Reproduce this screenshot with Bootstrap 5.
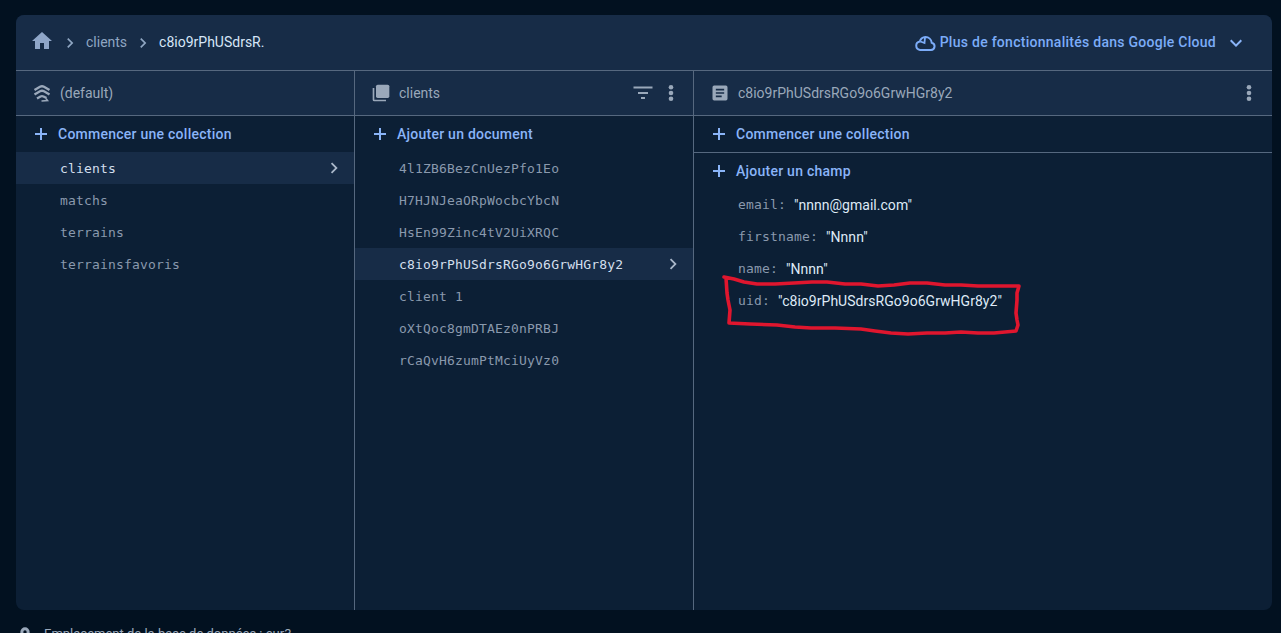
<!DOCTYPE html>
<html lang="fr">
<head>
<meta charset="UTF-8">
<title>Firestore</title>
<link href="https://cdn.jsdelivr.net/npm/bootstrap@5.3.0/dist/css/bootstrap.min.css" rel="stylesheet">
<style>
html, body { height: 633px; overflow: hidden; }
body { background: #021120; font-family: Roboto, "Liberation Sans", sans-serif; font-size: 14px; color: #e3e8ef; }
.fs-page { padding: 15px 9px 0 16px; }
.fs-panel { position: relative; height: 595px; background: #0c1f35; border-radius: 8px; overflow: hidden; }
.fs-top { height: 56px; background: #172c47; border-bottom: 1px solid #56687f; padding: 0 24px 0 14px; }
.fs-home { margin-top: -4px; }
.fs-crumb { color: #8fa6c2; }
.fs-crumb-now { color: #d6e6f8; }
.fs-cloud { color: #7cacf8; font-weight: 500; letter-spacing: .27px; }
.fs-cols { height: 539px; }
.fs-col { width: 339px; border-right: 1px solid #56687f; flex: none; }
.fs-col:last-child { flex: 1 1 auto; width: auto; border-right: 0; }
.fs-colhead { height: 45px; background: #172c47; border-bottom: 1px solid #56687f; padding: 0 16px 0 16px; color: #9aa8ba; }
.fs-colhead .fs-ic { width: 20px; margin-right: 8px; }
.fs-add { height: 36px; padding-left: 18px; color: #8ab4f8; font-weight: 500; letter-spacing: .25px; }
.fs-add svg { margin-right: 10px; }
.fs-sep { height: 37px; border-bottom: 1px solid #56687f; }
.fs-row { height: 32px; padding: 2px 9px 0 44px; font-family: "DejaVu Sans Mono", "Liberation Mono", monospace; font-size: 13px; letter-spacing: .18px; color: #8a99ad; }
.fs-row.fs-sel { background: #172c47; color: #d3dfed; }
.fs-row.fs-sel svg { margin-top: -2px; }
.fs-field { height: 32px; padding-left: 44px; }
.fs-key { font-family: "DejaVu Sans Mono", "Liberation Mono", monospace; font-size: 13px; letter-spacing: .18px; color: #8a99ad; margin-right: 8px; }
.fs-val { color: #dfeaf7; letter-spacing: .03px; }
.fs-scribble { position: absolute; left: 0; top: 0; pointer-events: none; }
.fs-foot { padding: 14px 0 0 1px; color: #9aa8ba; font-size: 13px; line-height: 20px; }
.fs-foot svg { margin-right: 11px; }
</style>
</head>
<body>
<div class="fs-page">
  <div class="fs-panel">
    <div class="fs-top d-flex align-items-center">
      <svg class="fs-home" width="24" height="24" viewBox="0 0 24 24" fill="#8fa6c8"><path d="M10 20v-6h4v6h5v-8h3L12 3 2 12h3v8z"/></svg>
      <svg width="20" height="20" viewBox="0 0 24 24" fill="#8fa6c2" style="margin-left:6px;margin-right:6px"><path d="M8.600 16.600 13.200 12 8.600 7.400 10 6l6 6-6 6z"/></svg>
      <span class="fs-crumb">clients</span>
      <svg width="20" height="20" viewBox="0 0 24 24" fill="#8fa6c2" style="margin-left:6px;margin-right:6px"><path d="M8.600 16.600 13.200 12 8.600 7.400 10 6l6 6-6 6z"/></svg>
      <span class="fs-crumb-now">c8io9rPhUSdrsR.</span>
      <span class="ms-auto d-flex align-items-center fs-cloud">
        <svg width="22" height="22" viewBox="0 0 22 22" fill="none" stroke="#7cacf8" stroke-width="2" style="margin-right:4px"><path d="M6 18h11a3.700 3.700 0 0 0 .7-7.300A6.300 6.300 0 0 0 11.500 5 6.200 6.200 0 0 0 5.800 9.500 4.300 4.300 0 0 0 6 18z"/><path d="M11 5.500 10.500 11 6.500 9.500" stroke-width="1.800"/></svg>
        Plus de fonctionnalités dans Google Cloud
        <svg width="24" height="24" viewBox="0 0 24 24" fill="#8ab4f8" style="margin-left:8px"><path d="M7.400 8.600 12 13.200l4.600-4.600L18 10l-6 6-6-6z"/></svg>
      </span>
    </div>
    <div class="fs-cols d-flex">
      <div class="fs-col">
        <div class="fs-colhead d-flex align-items-center">
          <svg class="fs-ic" width="20" height="20" viewBox="0 0 20 20" fill="none" stroke="#9aa8ba" stroke-width="2.400"><path d="M2.500 7 8 3.800Q10 2.800 12 3.800L17.500 7"/><path d="M2.500 11.500 8 8.300Q10 7.300 12 8.300L17.500 11.500"/><path d="M5 15.500 8.500 13.500Q10 12.800 11.500 13.500L14.500 15"/><path d="M9.500 18l6-.5-1.500-2" stroke-width="1.600"/></svg>
          <span>(default)</span>
        </div>
        <div class="fs-add d-flex align-items-center">
          <svg width="14" height="14" viewBox="0 0 14 14" fill="#8ab4f8"><path d="M6 1h2v5h5v2H8v5H6V8H1V6h5z"/></svg>
          Commencer une collection
        </div>
        <div class="fs-row fs-sel d-flex align-items-center justify-content-between">clients
          <svg width="22" height="22" viewBox="0 0 24 24" fill="#a9b7c9"><path d="M8.600 16.600 13.200 12 8.600 7.400 10 6l6 6-6 6z"/></svg>
        </div>
        <div class="fs-row d-flex align-items-center">matchs</div>
        <div class="fs-row d-flex align-items-center">terrains</div>
        <div class="fs-row d-flex align-items-center">terrainsfavoris</div>
      </div>
      <div class="fs-col">
        <div class="fs-colhead d-flex align-items-center">
          <svg class="fs-ic" width="20" height="20" viewBox="0 0 24 24" fill="#9aa8ba"><path d="M4 6H2v14a2 2 0 0 0 2 2h14v-2H4z"/><path d="M20 2H8a2 2 0 0 0-2 2v12a2 2 0 0 0 2 2h12a2 2 0 0 0 2-2V4a2 2 0 0 0-2-2z"/></svg>
          <span>clients</span>
          <svg class="ms-auto" width="24" height="24" viewBox="0 0 24 24" fill="#9aa8ba" style="margin-right:6px"><path d="M2.500 5.500h19v2h-19zM7 11h10v2H7zM10 16h4v2h-4z"/></svg>
          <svg width="20" height="24" viewBox="0 0 20 24" fill="#9aa8ba" style="margin-right:-4px"><circle cx="10" cy="6.300" r="2.300"/><circle cx="10" cy="12" r="2.300"/><circle cx="10" cy="17.700" r="2.300"/></svg>
        </div>
        <div class="fs-add d-flex align-items-center">
          <svg width="14" height="14" viewBox="0 0 14 14" fill="#8ab4f8"><path d="M6 1h2v5h5v2H8v5H6V8H1V6h5z"/></svg>
          Ajouter un document
        </div>
        <div class="fs-row d-flex align-items-center">4l1ZB6BezCnUezPfo1Eo</div>
        <div class="fs-row d-flex align-items-center">H7HJNJeaORpWocbcYbcN</div>
        <div class="fs-row d-flex align-items-center">HsEn99Zinc4tV2UiXRQC</div>
        <div class="fs-row fs-sel d-flex align-items-center justify-content-between">c8io9rPhUSdrsRGo9o6GrwHGr8y2
          <svg width="22" height="22" viewBox="0 0 24 24" fill="#a9b7c9"><path d="M8.600 16.600 13.200 12 8.600 7.400 10 6l6 6-6 6z"/></svg>
        </div>
        <div class="fs-row d-flex align-items-center">client 1</div>
        <div class="fs-row d-flex align-items-center">oXtQoc8gmDTAEz0nPRBJ</div>
        <div class="fs-row d-flex align-items-center">rCaQvH6zumPtMciUyVz0</div>
      </div>
      <div class="fs-col">
        <div class="fs-colhead d-flex align-items-center">
          <svg class="fs-ic" width="20" height="20" viewBox="0 0 24 24" fill="#9aa8ba"><path d="M19 3H5a2 2 0 0 0-2 2v14a2 2 0 0 0 2 2h14a2 2 0 0 0 2-2V5a2 2 0 0 0-2-2zm-5 14H7v-2h7zm3-4H7v-2h10zm0-4H7V7h10z"/></svg>
          <span>c8io9rPhUSdrsRGo9o6GrwHGr8y2</span>
          <svg class="ms-auto" width="20" height="24" viewBox="0 0 20 24" fill="#9aa8ba" style="margin-right:-3px"><circle cx="10" cy="6.300" r="2.300"/><circle cx="10" cy="12" r="2.300"/><circle cx="10" cy="17.700" r="2.300"/></svg>
        </div>
        <div class="fs-add fs-sep d-flex align-items-center">
          <svg width="14" height="14" viewBox="0 0 14 14" fill="#8ab4f8"><path d="M6 1h2v5h5v2H8v5H6V8H1V6h5z"/></svg>
          Commencer une collection
        </div>
        <div class="fs-add d-flex align-items-center">
          <svg width="14" height="14" viewBox="0 0 14 14" fill="#8ab4f8"><path d="M6 1h2v5h5v2H8v5H6V8H1V6h5z"/></svg>
          Ajouter un champ
        </div>
        <div>
          <div class="fs-field d-flex align-items-center"><span class="fs-key">email:</span><span class="fs-val">"nnnn@gmail.com"</span></div>
          <div class="fs-field d-flex align-items-center"><span class="fs-key">firstname:</span><span class="fs-val">"Nnnn"</span></div>
          <div class="fs-field d-flex align-items-center"><span class="fs-key">name:</span><span class="fs-val">"Nnnn"</span></div>
          <div class="fs-field d-flex align-items-center"><span class="fs-key">uid:</span><span class="fs-val">"c8io9rPhUSdrsRGo9o6GrwHGr8y2"</span></div>
        </div>
      </div>
    </div>
    <svg class="fs-scribble" width="1256" height="595" viewBox="16 15 1256 595" fill="none" stroke="#e0162e" stroke-width="3.600" stroke-linecap="round" stroke-linejoin="round">
      <path d="M724 277 L734 279 L744 282 L757 284 L775 284 L794 283 L812 282 L827 282 L845 284 L861 284 L878 286 L894 285 L910 283 L927 283 L945 285 L961 285 L978 286 L994 286 L1008 286 L1019 286 L1017 293 L1017 300 L1016 313 L1017 320 L1018 325 L1016 331 L1005 332 L994 333 L978 333 L961 332 L945 333 L927 333 L908 334 L891 333 L875 331 L861 329 L835 328 L811 328 L795 327 L777 325 L750 324 L729 323 L730 310 L728 300 L727 293 L726 278"/>
    </svg>
  </div>
  <div class="fs-foot d-flex align-items-center">
    <svg width="16" height="20" viewBox="0 0 24 24" fill="#9aa8ba"><path d="M12 2a7 7 0 0 0-7 7c0 5.250 7 13 7 13s7-7.750 7-13a7 7 0 0 0-7-7zm0 9.500A2.500 2.500 0 1 1 12 6.500a2.500 2.500 0 0 1 0 5z"/></svg>
    Emplacement de la base de données : eur3
  </div>
</div>
<script src="https://cdn.jsdelivr.net/npm/bootstrap@5.3.0/dist/js/bootstrap.bundle.min.js"></script>
</body>
</html>
